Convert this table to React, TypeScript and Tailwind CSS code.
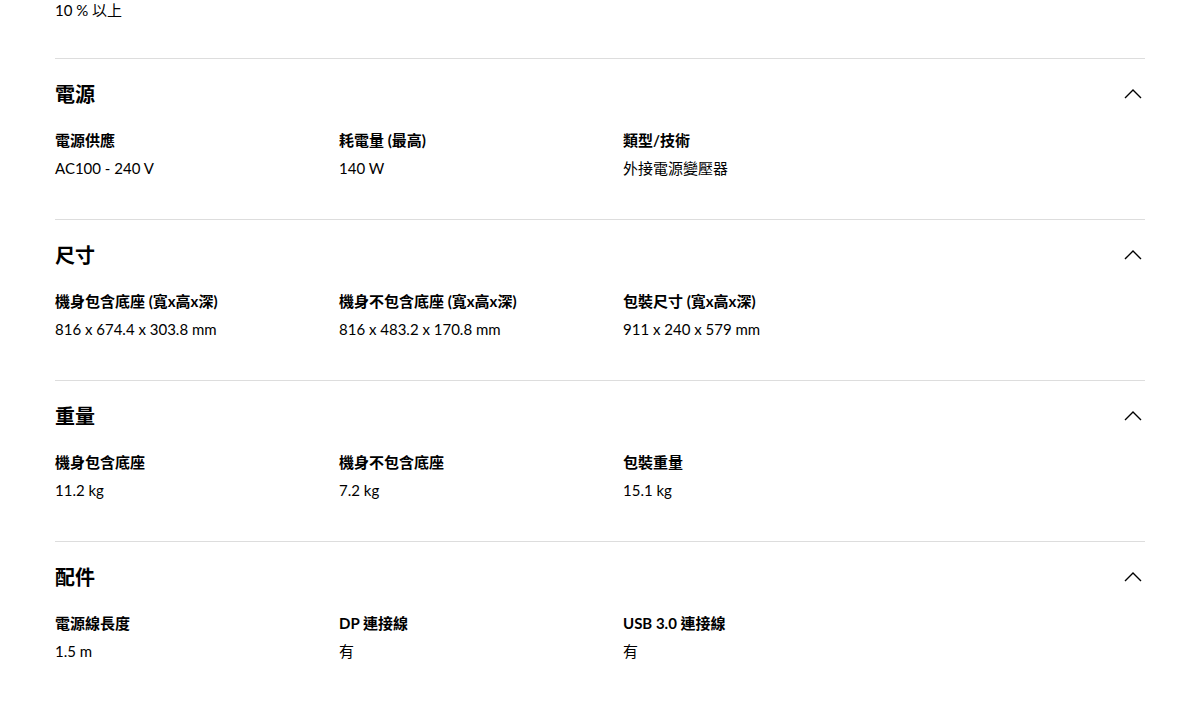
type Spec = { label: string; value: string };
type Section = { title: string; specs: Spec[] };

const sections: Section[] = [
  {
    title: '電源',
    specs: [
      { label: '電源供應', value: 'AC100 - 240 V' },
      { label: '耗電量 (最高)', value: '140 W' },
      { label: '類型/技術', value: '外接電源變壓器' },
    ],
  },
  {
    title: '尺寸',
    specs: [
      { label: '機身包含底座 (寬x高x深)', value: '816 x 674.4 x 303.8 mm' },
      { label: '機身不包含底座 (寬x高x深)', value: '816 x 483.2 x 170.8 mm' },
      { label: '包裝尺寸 (寬x高x深)', value: '911 x 240 x 579 mm' },
    ],
  },
  {
    title: '重量',
    specs: [
      { label: '機身包含底座', value: '11.2 kg' },
      { label: '機身不包含底座', value: '7.2 kg' },
      { label: '包裝重量', value: '15.1 kg' },
    ],
  },
  {
    title: '配件',
    specs: [
      { label: '電源線長度', value: '1.5 m' },
      { label: 'DP 連接線', value: '有' },
      { label: 'USB 3.0 連接線', value: '有' },
    ],
  },
];

function Chevron() {
  return (
    <svg width="18" height="10" viewBox="0 0 18 10" fill="none" className="mr-[3px]">
      <polyline points="1,9 9,1 17,9" stroke="#000" strokeWidth="1.4" />
    </svg>
  );
}

export default function App() {
  return (
    <div
      className="min-h-screen bg-white text-black"
      style={{ fontFamily: 'Lato, "Noto Sans CJK TC", sans-serif' }}
    >
      <div className="mx-auto w-[1090px]">
        {/* tail of the previous section */}
        <div className="pb-[38px] text-[15px] leading-[20px]">10 % 以上</div>

        {sections.map((s) => (
          <section key={s.title} className="border-t border-[#dddddd] pt-[21px] pb-[41px]">
            <div className="flex items-center justify-between h-[28px]">
              <h2 className="text-[20px] font-bold leading-[28px]">{s.title}</h2>
              <Chevron />
            </div>
            <div className="grid grid-cols-[284px_284px_284px] mt-[22px]">
              {s.specs.map((sp) => (
                <div key={sp.label} className="flex flex-col gap-[8px]">
                  <div className="text-[15px] font-bold leading-[20px]">{sp.label}</div>
                  <div className="text-[15px] leading-[20px]">{sp.value}</div>
                </div>
              ))}
            </div>
          </section>
        ))}
      </div>
    </div>
  );
}
